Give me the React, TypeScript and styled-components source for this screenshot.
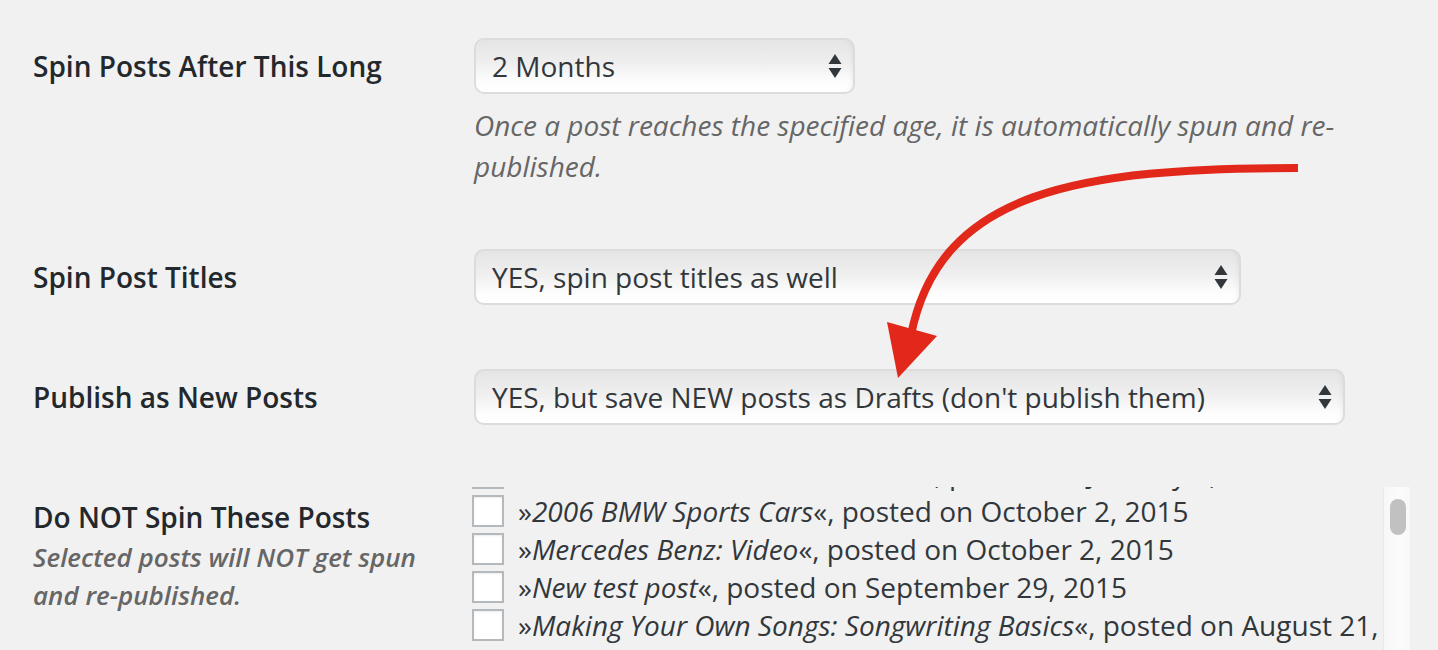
import styled, { createGlobalStyle } from "styled-components";

const GlobalStyle = createGlobalStyle`
  html, body {
    margin: 0;
    padding: 0;
    background: #f1f1f1;
    overflow: hidden;
  }
  body {
    font-family: "Open Sans", "Liberation Sans", sans-serif;
    color: #444;
  }
`;

const Page = styled.div`
  position: relative;
  box-sizing: border-box;
  height: 650px;
  padding: 38px 0 0 33px;
`;

const Row = styled.div<{ $gap: number }>`
  display: grid;
  grid-template-columns: 441px 1fr;
  margin-top: ${(p) => p.$gap}px;
`;

const Label = styled.div<{ $pad?: number; $lh?: number }>`
  padding-top: ${(p) => p.$pad || 0}px;
  font-size: 28px;
  font-weight: 600;
  line-height: ${(p) => p.$lh || 56}px;
  color: #23282d;
  white-space: nowrap;
`;

const LabelNote = styled.div`
  margin-top: 1px;
  font-size: 26px;
  font-weight: 600;
  font-style: italic;
  line-height: 38px;
  color: #666;
`;

const Field = styled.div`
  display: flex;
  flex-direction: column;
  align-items: flex-start;
`;

const SelectBox = styled.div<{ $w: number }>`
  box-sizing: border-box;
  width: ${(p) => p.$w}px;
  height: 56px;
  display: flex;
  align-items: center;
  justify-content: space-between;
  padding: 0 11px 0 16px;
  border: 2px solid #dcdcdc;
  border-radius: 10px;
  background: linear-gradient(#e5e5e5, #efefef 45%, #fdfdfd 80%, #fff);
  box-shadow: inset -6px 0 6px -6px rgba(0, 0, 0, 0.08);
  font-size: 28px;
  line-height: 1;
  color: #32373c;
  white-space: nowrap;
`;

const Description = styled.p`
  margin: 11px 0 0;
  max-width: 900px;
  font-size: 28px;
  font-style: italic;
  line-height: 41px;
  color: #666;
`;

const ListFrame = styled.div`
  display: flex;
  width: 938px;
  height: 168px;
  margin-left: -2px;
`;

const ListViewport = styled.div`
  flex: 1;
  overflow: hidden;
`;

const ListInner = styled.div<{ $offset: number }>`
  margin-top: -${(p) => p.$offset}px;
`;

const Track = styled.div`
  flex-shrink: 0;
  box-sizing: border-box;
  width: 27px;
  padding: 12px 4px 0 7px;
  background: linear-gradient(90deg, #f7f7f7, #fbfbfb 60%, #f8f8f8);
  box-shadow: inset 1px 0 0 #e8e8e8;
`;

const Thumb = styled.div`
  height: 36px;
  border-radius: 8px;
  background: #c1c1c1;
`;

const PostItem = styled.label`
  display: flex;
  align-items: flex-start;
  font-size: 28px;
  line-height: 38px;
  color: #32373c;
`;

const Check = styled.span`
  flex-shrink: 0;
  box-sizing: border-box;
  width: 32px;
  height: 32px;
  margin: 3px 14px 0 0;
  border: 2px solid #b4b9be;
  background: #fff;
  box-shadow: inset 0 1px 2px rgba(0, 0, 0, 0.08);
`;

const Title = styled.em`
  font-style: italic;
`;

const ArrowLayer = styled.svg`
  position: absolute;
  left: 0;
  top: 0;
  pointer-events: none;
`;

function Updown() {
  return (
    <svg width="14" height="26" viewBox="0 0 14 26">
      <polygon points="7,1 13.5,11 0.5,11" fill="#32373c" />
      <polygon points="0.5,15 13.5,15 7,25" fill="#32373c" />
    </svg>
  );
}

const posts: [string, string][] = [
  ["Top 10 Road Trips", "October 5, 2015"],
  ["Electric Cars: The Future Is Here", "January 9, 2015"],
  ["2006 BMW Sports Cars", "October 2, 2015"],
  ["Mercedes Benz: Video", "October 2, 2015"],
  ["New test post", "September 29, 2015"],
  ["Making Your Own Songs: Songwriting Basics", "August 21, 2015"],
  ["Guitar Chords for Beginners", "August 19, 2015"],
  ["Healthy Breakfast Ideas", "August 3, 2015"],
];

export default function App() {
  return (
    <Page>
      <GlobalStyle />
      <Row $gap={0}>
        <Label>Spin Posts After This Long</Label>
        <Field>
          <SelectBox $w={381}>
            <span>2 Months</span>
            <Updown />
          </SelectBox>
          <Description>
            Once a post reaches the specified age, it is automatically spun and re-published.
          </Description>
        </Field>
      </Row>

      <Row $gap={62}>
        <Label>Spin Post Titles</Label>
        <Field>
          <SelectBox $w={767}>
            <span>YES, spin post titles as well</span>
            <Updown />
          </SelectBox>
        </Field>
      </Row>

      <Row $gap={64}>
        <Label>Publish as New Posts</Label>
        <Field>
          <SelectBox $w={871}>
            <span>YES, but save NEW posts as Drafts (don't publish them)</span>
            <Updown />
          </SelectBox>
        </Field>
      </Row>

      <Row $gap={62}>
        <div>
          <Label $pad={10} $lh={40}>Do NOT Spin These Posts</Label>
          <LabelNote>
            Selected posts will NOT get spun
            <br />
            and re-published.
          </LabelNote>
        </div>
        <ListFrame>
          <ListViewport>
            <ListInner $offset={71}>
              {posts.map(([title, date]) => (
                <PostItem key={title}>
                  <Check />
                  <span>
                    »<Title>{title}</Title>«, posted on {date}
                  </span>
                </PostItem>
              ))}
            </ListInner>
          </ListViewport>
          <Track>
            <Thumb />
          </Track>
        </ListFrame>
      </Row>

      <ArrowLayer width="1438" height="650" viewBox="0 0 1438 650">
        <path
          d="M1298 168 C1080 168 940 190 911 335"
          fill="none"
          stroke="#e1281a"
          strokeWidth="8"
        />
        <polygon points="887,322 937,336 898,378" fill="#e1281a" />
      </ArrowLayer>
    </Page>
  );
}
